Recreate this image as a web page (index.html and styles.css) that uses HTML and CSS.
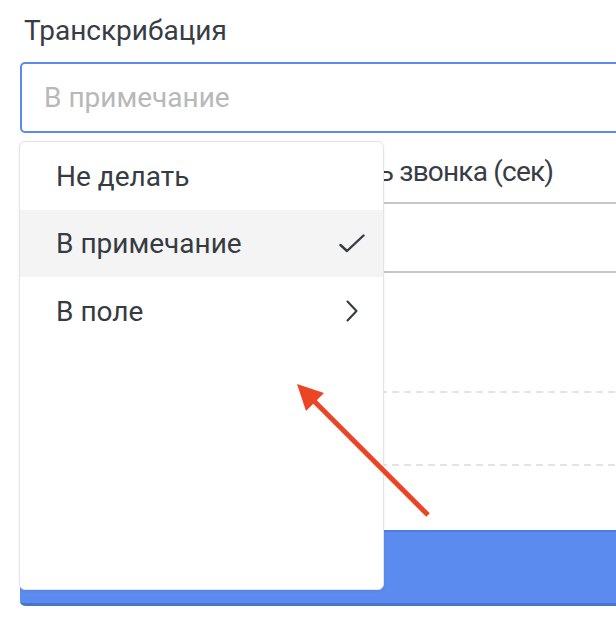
FILE: index.html
```html
<!DOCTYPE html>
<html lang="ru">
<head>
<meta charset="utf-8">
<title>Транскрибация</title>
<link rel="stylesheet" href="styles.css">
</head>
<body>
<div class="page">
  <div class="field">
    <div class="label">Транскрибация</div>
    <div class="select"><span class="placeholder">В примечание</span></div>
    <div class="menu">
      <div class="item"><span>Не делать</span></div>
      <div class="item active"><span>В примечание</span>
        <span class="slot"><svg width="26" height="20" viewBox="0 0 26 20"><path d="M1.5 11 L8 17 L24.5 1.5" fill="none" stroke="#363b42" stroke-width="2.4" stroke-linecap="round" stroke-linejoin="round"/></svg></span>
      </div>
      <div class="item"><span>В поле</span>
        <span class="slot"><svg width="12" height="22" viewBox="0 0 12 22"><path d="M1.5 1.5 L10.5 11 L1.5 20.5" fill="none" stroke="#363b42" stroke-width="2.1" stroke-linecap="round" stroke-linejoin="round"/></svg></span>
      </div>
    </div>
  </div>
  <div class="field second">
    <div class="label">Длительность звонка (сек)</div>
    <div class="input"></div>
  </div>
  <div class="rows">
    <div class="row"></div>
    <div class="row"></div>
  </div>
  <div class="btn"></div>
</div>
<svg class="arrow" width="616" height="634" viewBox="0 0 616 634">
  <line x1="428" y1="515" x2="310" y2="397" stroke="#ec4526" stroke-width="5" stroke-linecap="butt"/>
  <polygon points="297,384 324,393 306,411" fill="#ec4526"/>
</svg>
</body>
</html>
```
FILE: styles.css
```css
html, body {
  margin: 0;
  padding: 0;
  background: #ffffff;
  overflow: hidden;
}
body {
  width: 616px;
  height: 634px;
  position: relative;
  font-family: Roboto, "Noto Sans", sans-serif;
  color: #363b42;
}
.page {
  width: 640px;
  padding: 13px 0 0 20px;
}
.field {
  position: relative;
}
.label {
  font-size: 28px;
  line-height: 36px;
  height: 36px;
  padding-left: 4px;
  white-space: nowrap;
  color: #383d45;
}
.select {
  margin-top: 13px;
  height: 67px;
  border: 2px solid #5b8bec;
  border-radius: 5px;
  display: flex;
  align-items: center;
  padding-left: 22px;
}
.placeholder {
  font-size: 28px;
  color: #b8b8b8;
}
.menu {
  position: absolute;
  left: -1px;
  top: 128px;
  width: 363px;
  height: 447px;
  background: #fff;
  border: 1.5px solid #e4e4e4;
  border-radius: 6px;
  box-shadow: 0 1px 3px rgba(0, 0, 0, 0.06);
  z-index: 2;
}
.item {
  height: 68px;
  display: flex;
  align-items: center;
  justify-content: space-between;
  padding-left: 36px;
  padding-right: 16px;
  font-size: 28px;
  color: #363b42;
}
.item.active {
  height: 67px;
  background: #f4f4f4;
}
.slot {
  width: 30px;
  display: flex;
  justify-content: center;
  align-items: center;
}
.second .label {
  margin-top: 21px;
  padding-left: 195px;
  letter-spacing: -0.8px;
}
.second .input {
  margin-top: 12px;
  height: 67px;
  border: 2px solid #c6c6c6;
  border-radius: 5px;
}
.rows {
  margin-top: 118px;
  display: grid;
  grid-template-rows: 73px 66px;
}
.row {
  background: repeating-linear-gradient(to right, #e4e4e4 0 7px, transparent 7px 12px) top left / 100% 2px no-repeat;
}
.btn {
  height: 71px;
  background: #5b8bee;
  border-top: 2px solid #4f7edc;
  border-bottom: 3px solid #4a74cb;
  border-radius: 5px;
}
.arrow {
  position: absolute;
  left: 0;
  top: 0;
  z-index: 5;
  pointer-events: none;
}
```
